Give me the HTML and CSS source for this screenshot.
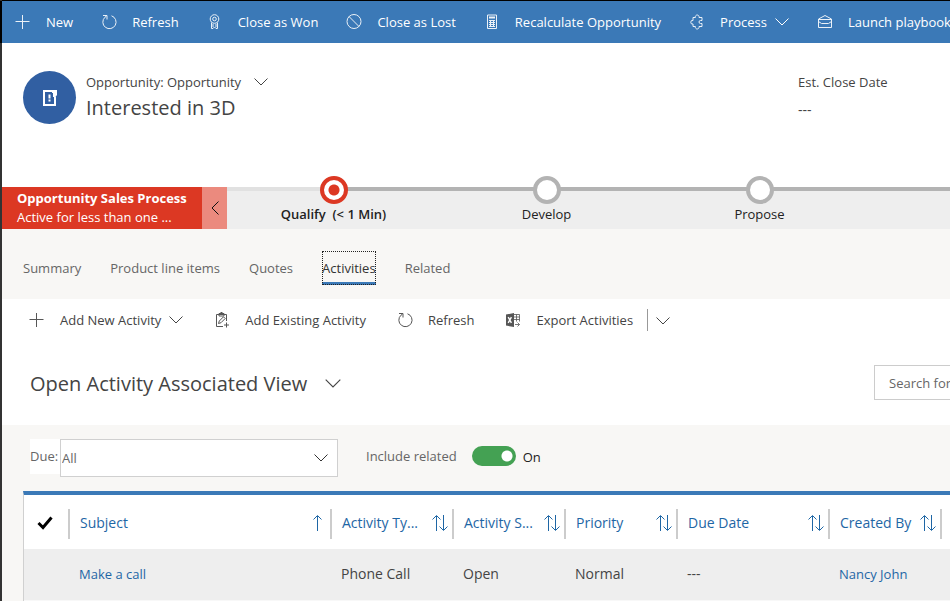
FILE: index.html
```html
<!DOCTYPE html>
<html lang="en">
<head>
<meta charset="utf-8">
<title>Opportunity: Interested in 3D</title>
<link rel="stylesheet" href="styles.css">
</head>
<body>
<svg class="defs" aria-hidden="true">
  <symbol id="chevron" viewBox="0 0 14 8"><path d="M.5.5 7 7 13.500.5" /></symbol>
  <symbol id="plus" viewBox="0 0 16 16"><path d="M7.500 1v14M.5 7.500h14"/></symbol>
  <symbol id="refresh" viewBox="0 0 16 16"><path d="M2 1.500h4v4M5.500 2 4 3.200A6.600 6.600 0 1 0 10.500 1.800"/></symbol>
  <symbol id="sort" viewBox="0 0 16 16"><path d="M4.500 16V1M.5 4.500l4-4 4 4M11.500 0v15M7.500 11.500l4 4 4-4"/></symbol>
  <symbol id="sort-up" viewBox="0 0 10 16"><path d="M5.500 16V1M1.500 4.500l4-4 4 4"/></symbol>
</svg>
<div class="page">
  <nav class="commands" aria-label="Commands">
    <button class="command"><svg class="icon"><use href="#plus"/></svg>New</button>
    <button class="command"><svg class="icon"><use href="#refresh"/></svg>Refresh</button>
    <button class="command"><svg class="icon" viewBox="0 0 16 16"><circle cx="7.500" cy="5" r="4.300"/><circle cx="7.500" cy="5" r="1.800"/><path d="M4.500 8.500v6h1.500l1.500-1.500 1.500 1.500h1.500v-6M6 10v3M9 10v3"/></svg>Close as Won</button>
    <button class="command"><svg class="icon" viewBox="0 0 16 16"><circle cx="8" cy="7.500" r="7"/><path d="M3 2.500l10 10"/></svg>Close as Lost</button>
    <button class="command"><svg class="icon" viewBox="0 0 16 16"><path d="M3.500 1v13.500h9V1z"/><path class="solid" d="M5 2.500h6v2H5z"/><path d="M5 6.500h6M5 8.500h6M5 10.500h6M5 12.500h6M6.500 6v7M9.500 6v7"/></svg>Recalculate Opportunity</button>
    <button class="command"><svg class="icon" viewBox="0 0 16 16"><path d="M13 6.500V3.500H10a1.900 1.900 0 1 0-3.600 0H4v3a1.800 1.800 0 1 0 0 3.500v2.500h2.400a1.900 1.900 0 1 0 3.600 0h3V9.500h-1.500a1.500 1.500 0 1 1 0-3z"/></svg>Process<svg class="chevron"><use href="#chevron"/></svg></button>
    <button class="command"><svg class="icon" viewBox="0 0 16 16"><path d="M1.500 5v8.500h13V5L8 1.500zM1.500 7.500l3 2h7l3-2M1.500 5.500h13"/></svg>Launch playbook</button>
  </nav>

  <header class="record">
    <span class="avatar"><svg viewBox="0 0 16 18"><path class="thick" d="M11 2H2v14h11V8"/><path class="solid" d="M10 1h5v5l-1.500 2H11V4h-1zM6.500 5.500h2v4h-2zM6.500 10.500h2v2h-2z"/></svg></span>
    <div class="heading">
      <button class="form-picker">Opportunity: Opportunity<svg class="chevron"><use href="#chevron"/></svg></button>
      <h1>Interested in 3D</h1>
    </div>
    <dl class="field"><dt>Est. Close Date</dt><dd>---</dd></dl>
  </header>

  <section class="process">
    <div class="process-name"><strong>Opportunity Sales Process</strong><span>Active for less than one ...</span></div>
    <button class="collapse" aria-label="Collapse"><svg viewBox="0 0 8 14"><path d="M7.500.5 1 7l6.500 6.500"/></svg></button>
    <ol class="stages">
      <li class="stage active"><i class="dot"></i>Qualify&nbsp; (&lt; 1 Min)</li>
      <li class="stage"><i class="dot"></i>Develop</li>
      <li class="stage"><i class="dot"></i>Propose</li>
    </ol>
  </section>

  <nav class="tabs" aria-label="Sections">
    <a href="#summary">Summary</a>
    <a href="#products">Product line items</a>
    <a href="#quotes">Quotes</a>
    <a href="#activities" class="current">Activities</a>
    <a href="#related-records">Related</a>
  </nav>

  <main>
    <div class="toolbar">
      <button class="command"><svg class="icon"><use href="#plus"/></svg>Add New Activity<svg class="chevron"><use href="#chevron"/></svg></button>
      <button class="command"><svg class="icon" viewBox="0 0 16 16"><path d="M9 14.500H2.500v-12h10V9M5 1.500h5v2.500H5zM6.500.5h2M4.500 11.500l.8-2.500L9.500 4.800l1.700 1.700L7 10.700zM12.500 10.500v5M10 13h5"/></svg>Add Existing Activity</button>
      <button class="command"><svg class="icon"><use href="#refresh"/></svg>Refresh</button>
      <button class="command"><svg class="icon" viewBox="0 0 16 16"><path class="solid" d="M1 2.500 9 1v14l-8-1.500z"/><path class="cut" d="M3.200 5.200l3.200 5.600M6.400 5.200l-3.200 5.600"/><path class="fine" d="M9 2.500h5.500v7M9 5h5.500M9 7.500h5.500M11.500 2.500v7M10 12.500h4.500M12.500 10.500l2 2-2 2"/></svg>Export Activities</button>
      <button class="more" aria-label="More export options"><svg class="chevron"><use href="#chevron"/></svg></button>
    </div>

    <div class="view">
      <button class="view-picker">Open Activity Associated View<svg class="chevron"><use href="#chevron"/></svg></button>
      <input class="search" type="text" placeholder="Search for records" aria-label="Search for records">
    </div>

    <section class="list">
      <div class="filters">
        <label class="due" for="due">Due:</label>
        <div class="select">
          <select id="due"><option>All</option></select>
          <svg class="chevron"><use href="#chevron"/></svg>
        </div>
        <label class="related" for="related">Include related</label>
        <input class="switch" id="related" type="checkbox" checked>
        <span class="state">On</span>
      </div>
      <div class="grid">
        <table>
          <colgroup><col class="c-check"><col class="c-subject"><col class="c-type"><col class="c-narrow"><col class="c-narrow"><col class="c-date"><col class="c-narrow"><col></colgroup>
          <thead>
            <tr>
              <th><div class="cell tick"><svg viewBox="0 0 16 14"><path d="M1.500 7 6 11.500l8.500-10"/></svg></div></th>
              <th><div class="cell">Subject<svg class="sort up"><use href="#sort-up"/></svg></div></th>
              <th><div class="cell">Activity Ty...<svg class="sort"><use href="#sort"/></svg></div></th>
              <th><div class="cell">Activity S...<svg class="sort"><use href="#sort"/></svg></div></th>
              <th><div class="cell">Priority<svg class="sort"><use href="#sort"/></svg></div></th>
              <th><div class="cell">Due Date<svg class="sort"><use href="#sort"/></svg></div></th>
              <th><div class="cell">Created By<svg class="sort"><use href="#sort"/></svg></div></th>
              <th></th>
            </tr>
          </thead>
          <tbody>
            <tr><td></td><td><a href="#call">Make a call</a></td><td>Phone Call</td><td>Open</td><td>Normal</td><td>---</td><td><a href="#nancy">Nancy John</a></td><td></td></tr>
          </tbody>
        </table>
      </div>
    </section>
  </main>
</div>
</body>
</html>
```
FILE: styles.css
```css
* { box-sizing: border-box; }

body {
  margin: 0;
  overflow: hidden;
  background: #333;
  color: #444;
  font: 13px/20px "Open Sans", "Noto Sans", sans-serif;
}

button, input, select { font: inherit; color: inherit; }
button { padding: 0; border: 0; background: none; white-space: nowrap; }
a { color: inherit; text-decoration: none; }

svg { flex: none; fill: none; stroke: currentColor; stroke-width: 1; }
.defs { display: block; width: 0; height: 0; }
.icon { width: 16px; height: 16px; opacity: 0.9; }
.chevron { width: 14px; height: 8px; }
.solid { fill: currentColor; stroke: none; }
.thick { stroke-width: 2; }
.fine { stroke-width: 0.8; }
.cut { stroke: #fff; stroke-width: 1.4; }

.page {
  min-height: 100vh;
  border-top: 1px solid #000;
  margin-left: 2px;
  background: #fff;
}

.commands {
  display: flex;
  gap: 28px;
  height: 42px;
  margin-left: -2px;
  padding-left: 13px;
  overflow: hidden;
  border-left: 2px solid #000;
  background: #3b79b7;
  color: #fff;
  font-weight: 500;
}
.command { display: flex; align-items: center; gap: 15px; }
.command .chevron { margin-left: -7px; }

.record {
  display: flex;
  align-items: flex-start;
  gap: 10px;
  height: 144px;
  padding: 28px 0 0 21px;
}
.avatar {
  display: grid;
  place-items: center;
  width: 53px;
  height: 53px;
  border-radius: 50%;
  background: #315fa2;
  color: #fff;
}
.avatar svg { width: 16px; height: 18px; }
.form-picker { display: flex; align-items: center; gap: 13px; height: 22px; }
h1 { margin: 0; font-size: 20px; line-height: 30px; font-weight: 400; }
.field { width: 152px; margin: 0 0 0 auto; line-height: 22px; }
.field dd { margin: 6px 0 0; font-size: 14px; }

.process { display: flex; height: 42px; background: #eee; }
.process-name {
  display: flex;
  flex-direction: column;
  justify-content: center;
  width: 200px;
  padding-left: 15px;
  background: #dc3823;
  color: #fff;
  line-height: 19px;
  white-space: nowrap;
}
.process-name span { font-weight: 500; }
.collapse {
  display: grid;
  place-items: center;
  width: 25px;
  background: #eb8a7e;
  color: #111;
}
.collapse svg { width: 8px; height: 14px; }
.stages {
  display: flex;
  flex: 1;
  margin: 0;
  padding: 0;
  border-top: 4px solid #b3b3b3;
  list-style: none;
  color: #222;
}
.stage {
  display: flex;
  flex-direction: column;
  align-items: center;
  width: 213px;
  margin-top: -15px;
}
.stage .dot {
  width: 28px;
  height: 28px;
  border: 4px solid #b3b3b3;
  border-radius: 50%;
  background: #fff;
}
.active { position: relative; font-weight: 600; }
.active::before {
  content: "";
  position: absolute;
  top: 11px;
  left: 0;
  width: 50%;
  height: 4px;
  background: #e1e1e1;
}
.active .dot {
  position: relative;
  border-color: #dc3823;
  background: radial-gradient(circle, #dc3823 5px, #fff 6px);
}

.tabs {
  display: flex;
  align-items: flex-start;
  gap: 29px;
  height: 70px;
  padding: 22px 21px 0;
  background: #f8f7f5;
  color: #666;
}
.tabs a { padding: 7px 0 4px; border-bottom: 3px solid transparent; }
.tabs .current {
  border-color: #3b79b7;
  outline: 1px dotted #222;
  outline-offset: -1px;
  color: #333;
  font-weight: 500;
}

.toolbar { display: flex; gap: 31px; height: 42px; padding-left: 27px; }
.more {
  align-self: center;
  height: 22px;
  margin-left: -17px;
  padding-left: 8px;
  border-left: 1px solid #999;
}

.view { display: flex; align-items: flex-start; height: 84px; padding: 24px 0 0 28px; }
.view-picker {
  display: flex;
  align-items: center;
  gap: 18px;
  height: 37px;
  font-size: 20px;
}
.view-picker .chevron { width: 16px; height: 9px; }
.search {
  width: 76px;
  height: 35px;
  margin-left: auto;
  padding: 0 0 0 14px;
  border: 1px solid #ccc;
  border-right: 0;
  border-radius: 0;
  outline: 0;
}
.search::placeholder { color: #666; }

.list { padding: 14px 0 0 21px; background: #f8f7f5; }
.filters { display: flex; align-items: flex-start; height: 52px; padding-left: 7px; color: #666; }
.due { width: 30px; height: 35px; background: #fff; line-height: 35px; }
.select { position: relative; width: 278px; height: 38px; }
.select select {
  width: 100%;
  height: 100%;
  padding: 0 1px;
  border: 1px solid #d0d0d0;
  border-radius: 0;
  appearance: none;
  background: #fff;
}
.select .chevron { position: absolute; top: 15px; right: 10px; color: #333; }
.related { margin-left: 28px; line-height: 35px; }
.switch {
  appearance: none;
  width: 44px;
  height: 20px;
  margin: 7px 7px 0 15px;
  border-radius: 10px;
  background: radial-gradient(circle at 35px 10px, #fff 5px, #44a153 6px);
}
.state { color: #222; line-height: 36px; }

.grid {
  overflow: hidden;
  border-top: 4px solid #3b79b7;
  border-left: 1px solid #d0d0d0;
  background: #fff;
}
table { width: 100%; table-layout: fixed; border-collapse: collapse; }
th, td { padding: 0; text-align: left; font-size: 14px; font-weight: 400; white-space: nowrap; }
.c-check { width: 46px; }
.c-subject { width: 262px; }
.c-type { width: 122px; }
.c-narrow { width: 112px; }
.c-date { width: 152px; }
th { height: 54px; color: #1e66a5; }
.cell {
  display: flex;
  align-items: center;
  justify-content: space-between;
  height: 30px;
  margin-top: 4px;
  padding: 0 4px 2px 10px;
  border-right: 2px solid #ccc;
}
.sort { width: 16px; height: 16px; }
.sort.up { width: 10px; margin-right: 4px; }
.tick { padding-left: 13px; color: #000; }
.tick svg { width: 16px; height: 14px; stroke-width: 3; }
td { height: 51px; padding-left: 9px; background: #eee; border-bottom: 1px solid #f8f8f8; }
td a { color: #1e66a5; font-size: 13px; }
```
